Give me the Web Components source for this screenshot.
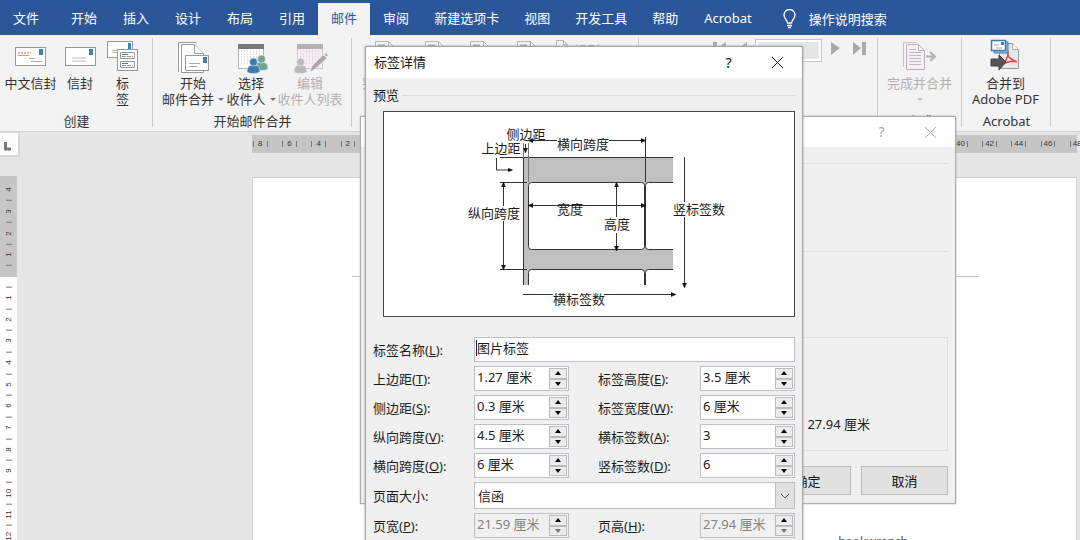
<!DOCTYPE html>
<html lang="zh-CN">
<head>
<meta charset="utf-8">
<title>标签详情</title>
<style>
html,body{margin:0;height:100%;overflow:hidden}
body{font:13px/16px "Noto Sans","Noto Sans CJK SC",sans-serif;color:#333}
</style>
</head>
<body>
<word-app></word-app>
<script>
const define = (name, html) => customElements.define(name, class extends HTMLElement {
  constructor() {
    super();
    this.attachShadow({ mode: 'open' });
  }
  connectedCallback() {
    if (this.shadowRoot.childNodes.length) return;
    const t = document.createElement('template');
    t.innerHTML = typeof html === 'function' ? html(this) : html;
    this.shadowRoot.append(t.content.cloneNode(true));
  }
});

const envelope = (x, y, w, h, s = '#999') => `<rect x="${x + .5}" y="${y + .5}" width="${w - 1}" height="${h - 1}" fill="#fff" stroke="${s}"/>`;
const grid = (dark, dot, fill) => {
  let d = '';
  for (let y = 13; y < 28; y += 3) for (let x = 7; x < 28; x += 3) d += `<path d="M${x} ${y}h1" stroke="${dot}"/>`;
  return `<rect x="4.500" y="6.500" width="25" height="24" fill="${fill}" stroke="${dot}"/><path d="M4 6h26v5H4z" fill="${dark}"/>${d}`;
};
const person = (x, y, c) => `<g transform="translate(${x} ${y})" fill="${c}" stroke="#f3f3f3" stroke-width=".6"><path d="M0 14c0-5 2-7 6.500-7s6.500 2 6.500 7c-3 2-10 2-13 0z"/><circle cx="6.500" cy="4" r="4"/></g>`;

const ICONS = {
  cnEnvelope: envelope(2, 9, 31, 19) + '<path d="M26 11h4v6h-4z" fill="#3f7ec0"/><path d="M5 15h13" stroke="#efb6a5" stroke-width="2" stroke-dasharray="2 1"/><path d="M5 17.500h11M16 20.500h6M18 23.500h11" stroke="#aaa"/>',
  envelope: envelope(2, 9, 31, 19) + '<path d="M26 11h4v6h-4z" fill="#3f7ec0"/><path d="M9 20h14M9 23h14" stroke="#bbb"/>',
  labels: envelope(2, 3, 26, 17) + '<path d="M23 5h3v6h-3z" fill="#3f7ec0"/><path d="M7 12.500h5M7 14.500h5" stroke="#bbb"/>' + envelope(12, 11, 21, 22) +
    '<g fill="none" stroke="#999"><path d="M15.500 14.500h14v6h-14zM15.500 23.500h14v6h-14z"/><path d="M17 18.500h11M17 27.500h11" stroke-dasharray="4 1"/><path d="M17 16.500h6M17 25.500h6" stroke="#3f7ec0"/></g>',
  merge: '<g fill="#fff" stroke="#999"><path d="M2.500 34V4.500h18M5.500 34.500v-28h13l9 9v19z"/><path d="M18.500 6.500v9h9"/><path d="M9.500 17.500h23v15h-23z"/></g><path d="M27 19h4v6h-4z" fill="#3f7ec0"/><path d="M13 25.500h11M13 28.500h8" stroke="#aaa"/>',
  people: grid('#777', '#b5b5b5', '#fff') + person(21, 17, '#71a593') + person(13, 20, '#3f7ab5'),
  edit: grid('#b3b0b3', '#cdc6cd', '#f5eef5') + person(1, 20, '#bbb8bb') + '<path d="M17 34l2-6 11-11 4 3-12 11zM31 16l2-1 2 2-1 2z" fill="#aaa8aa" stroke="#f3f3f3" stroke-width=".5"/>',
  finish: '<path d="M1.500 29V4.500h13" fill="none" stroke="#c8c0c8"/><path d="M4.500 6.500h12l6 6v19h-18z" fill="#f6eff6" stroke="#b8b1b8"/><path d="M16.500 6.500v6h6M7 11.500h7M7 14.500h12M7 17.500h12M7 20.500h12M7 23.500h12M7 26.500h12" stroke="#c0b8c0" fill="none"/><path d="M24 18.500h8M28 14l5 4.500-5 4.500" fill="none" stroke="#b0b0b0" stroke-width="2"/>',
  pdf: '<path d="M11.500 5.500h13l6 6v19h-19z" fill="#e8e8e8" stroke="#999"/><path d="M24.500 5.500v6h6" fill="#fff" stroke="#aaa"/><path d="M12 28c6-4 9-10 8-15-2 7 5 9 9 11-5-2-11 0-16 3" fill="none" stroke="#f03e3e" stroke-width="1.500"/><path d="M6 4h14v11H6z" fill="#8db6dc" stroke="#3f7db5"/><path d="M3.500 2.500h14v10h-14z" fill="#fff" stroke="#3f7db5" stroke-width="1.500"/><path d="M13 4h3v3h-3z" fill="#3f7db5"/><path d="M6 7h5M8 10h6" stroke="#9ab"/><path d="M3 21h8v-4l7 7-7 8v-4H3z" fill="#555" stroke="#444"/>',
  page: '<path d="M4.500 3.500h13l7 7v22h-20z" fill="#f6f1f6" stroke="#b8b3b8"/><path d="M17.500 3.500v7h7" fill="none" stroke="#b8b3b8"/><path d="M7 7.500h7" stroke="#aaa" stroke-width="2"/>'
};

define('menu-tab', `<style>
:host{display:flex;height:100%}
button{all:unset;display:flex;align-items:center;box-sizing:border-box;padding:0 13px 2px;margin-top:3px;color:#fff;white-space:nowrap;cursor:default}
:host([wide]) button{padding:0 12px 2px}
:host([first]) button{margin-right:6px}
:host([active]) button{background:#f3f3f3;color:#2b579a}
</style><button type="button"><slot></slot></button>`);

define('ribbon-button', el => `<style>
:host{display:block;flex:none;width:var(--w,60px)}
button{all:unset;display:flex;flex-direction:column;align-items:center;width:100%;color:#333;white-space:nowrap;text-align:center}
button:disabled{color:#b1b1b1}
svg{width:35px;height:36px;flex:none;margin-bottom:1px}
.two{display:flex;align-items:center;gap:4px;min-height:16px}
i{border:3px solid transparent;border-top:3px solid #777;border-bottom:0}
button:disabled i{border-top-color:#bbb}
</style><button type="button" ${el.hasAttribute('disabled') ? 'disabled' : ''}>
<svg viewBox="0 0 35 36" aria-hidden="true">${ICONS[el.getAttribute('icon')]}</svg>
<span><slot></slot></span><span class="two"><slot name="second"></slot>${el.hasAttribute('menu') ? '<i></i>' : ''}</span></button>`);

define('ribbon-group', `<style>
:host{display:flex;flex-direction:column;flex:none;box-sizing:border-box;width:var(--w);padding:3px 0 1px;position:relative}
:host::after{content:"";position:absolute;right:0;top:3px;bottom:4px;border-right:1px solid #cbcbcb}
.tools{display:flex;flex:1;padding:0 var(--pad,0px)}
.caption{text-align:center;line-height:18px;height:18px}
</style><div class="tools"><slot></slot></div><div class="caption"><slot name="caption"></slot></div>`);

define('ruler-bar', el => {
  const v = el.hasAttribute('vertical');
  const cells = el.getAttribute('labels').split(',').map(n => `<span>${n === '-' ? '' : n}</span>`).join('');
  return `<style>
:host{display:block;font:8px/8px "Liberation Sans",sans-serif;color:#333;background:var(--bg,#c6c6c6)}
div{display:grid;height:100%}
.h{grid-template-columns:repeat(29,1fr);width:846px}
.h span{display:flex;align-items:center;justify-content:center;position:relative;width:50%;height:100%}
.h span::before,.h span::after{content:"";position:absolute;top:6px;height:6px;border-left:1px solid #777}
.h span::before{left:0}.h span::after{right:0}
.v{grid-auto-rows:1fr}
.v span{writing-mode:vertical-rl;transform:rotate(180deg);display:flex;align-items:center;justify-content:center;position:relative}
.v span::before{content:"";position:absolute;top:0;left:5px;width:6px;border-top:1px solid #777}
.v.end span::before{top:auto;bottom:0}
</style><div class="${v ? 'v' : 'h'} ${el.hasAttribute('end') ? 'end' : ''}">${cells}</div>`;
});

define('spin-field', el => {
  const off = el.hasAttribute('disabled') ? 'disabled' : '';
  return `<style>
:host{display:grid;grid-template-columns:1fr 95px;height:25px;color:#1c1c1c}
label{align-self:center;padding-top:1px}
.box{display:flex;box-sizing:border-box;border:1px solid #bfc0c7;background:#fff;padding:1px}
:host([disabled]) .box{background:#f0f0f0}
input{border:0;outline:0;padding:0 0 3px 1px;margin:0;width:0;flex:1;font:inherit;color:inherit;background:none}
input:disabled{color:#838383}
.steps{display:flex;flex-direction:column;width:18px}
button{flex:1;display:flex;align-items:center;justify-content:center;padding:0;margin:0;border:1px solid #bbb;background:#ececec;box-sizing:border-box;min-height:0}
i{border:3px solid transparent;border-bottom:4px solid #000;border-top:0}
.down i{border-top:4px solid #000;border-bottom:0}
:host([disabled]) .down i{border-top-color:#777}
</style><label for="f">${el.getAttribute('label')}(<u>${el.getAttribute('key')}</u>):</label>
<div class="box"><input id="f" type="text" value="${el.getAttribute('value')}" ${off}>
<span class="steps"><button type="button" aria-label="增加" ${off}><i></i></button><button type="button" class="down" aria-label="减少" ${off}><i></i></button></span></div>`;
});

define('name-field', `<style>
:host{display:grid;grid-template-columns:101px 1fr;height:25px;color:#1c1c1c}
label{align-self:center;padding-top:1px}
.box{display:flex;align-items:stretch;border:1px solid #bfc0c7;background:#fff;box-sizing:border-box;padding:1px}
.box::before{content:"";border-left:1px solid #222;margin:1px 0 4px}
input{border:0;outline:0;flex:1;min-width:0;padding:0 0 3px;font:inherit;color:inherit;background:none}
</style><label for="n">标签名称(<u>L</u>):</label><div class="box"><input id="n" type="text" value="图片标签"></div>`);

define('page-size-field', `<style>
:host{display:grid;grid-template-columns:101px 1fr;height:27px;color:#1c1c1c}
label{align-self:center}
.box{display:flex;position:relative;border:1px solid #bfc0c7;background:#fff;box-sizing:border-box}
select{appearance:none;border:0;outline:0;flex:1;padding:0 0 0 3px;margin:0;font:inherit;color:inherit;background:none}
svg{position:absolute;right:0;top:0;width:18px;height:25px;background:#e1e1e1;border-left:1px solid #bfc0c7;pointer-events:none}
</style><label for="s">页面大小:</label><div class="box"><select id="s"><option>信函</option></select>
<svg viewBox="0 0 18 25" aria-hidden="true"><path d="M5 11l4 4 4-4" fill="none" stroke="#555"/></svg></div>`);

const oneWay = ['M525.500 144v8', 'M496.500 158v12h15', 'M684.500 157v130', 'M523 294.500h152'].map(d => `<path d="${d}" marker-end="url(#a)"/>`).join('');
const twoWay = ['M529 140.500h116', 'M503.500 183v86', 'M529 205.500h116', 'M616.500 183v67'].map(d => `<path d="${d}" marker-start="url(#a)" marker-end="url(#a)"/>`).join('');

define('label-preview', `<style>
:host{display:block;border:1px solid #444;background:#fff}
svg{display:block;width:100%;height:204px}
text{fill:#1c1c1c;text-anchor:middle}
</style><svg viewBox="384 112 410 204" role="img" aria-label="预览">
<defs><clipPath id="c"><path d="M520 150h153v135H520z"/></clipPath>
<marker id="a" markerWidth="5" markerHeight="6" refX="4" refY="3" orient="auto-start-reverse" markerUnits="userSpaceOnUse"><path d="M0 1l5 2-5 2z" fill="#111" stroke="#111" stroke-width=".5"/></marker></defs>
<g clip-path="url(#c)"><path d="M523 157h150v128H523z" fill="#c0c0c0"/>
<g fill="#fff" stroke="#333"><rect x="528.500" y="182.500" width="116" height="67" rx="3"/><rect x="645.500" y="182.500" width="60" height="67" rx="3"/><rect x="528.500" y="269.500" width="116" height="40" rx="3"/><rect x="645.500" y="269.500" width="60" height="40" rx="3"/></g>
<path d="M523.500 285V157.500h150" fill="none" stroke="#333"/></g>
<g fill="none" stroke="#333">
<path d="M523.500 143v14M528.500 143v39" stroke="#777"/><path d="M645.500 137v45M500 157.500h23M500 182.500h27M500 269.500h27"/>
${oneWay}${twoWay}</g>
<g fill="#fff"><path d="M557 137h52v16h-52zM468 206h52v15h-52zM557 206h26v10h-26zM604 217h26v16h-26zM673 202h54v15h-54zM553 290h51v16h-51z"/></g>
<text x="526" y="139">侧边距</text><text x="501" y="153">上边距</text><text x="583" y="149">横向跨度</text><text x="494" y="218">纵向跨度</text><text x="570" y="214">宽度</text><text x="617" y="229">高度</text><text x="699" y="214">竖标签数</text><text x="579" y="304">横标签数</text>
</svg>`);

define('window-title', `<style>
:host{display:flex;align-items:center;height:31px;background:#fff;color:#111;padding-left:8px}
h2{flex:1;font:inherit;margin:0;padding-bottom:2px}
button{all:unset;display:flex;justify-content:center;width:49px;font-size:14px}
svg{width:11px;height:11px}
</style><h2><slot></slot></h2><button type="button" aria-label="帮助">?</button>
<button type="button" aria-label="关闭"><svg viewBox="0 0 11 11"><path d="M0 0l11 11M11 0L0 11" stroke="currentColor" fill="none"/></svg></button>`);

define('label-dialog', `<style>
:host{display:block;border:1px solid #a5a5a5;background:#f0f0f0;box-shadow:0 0 2px #999;box-sizing:border-box;color:#1c1c1c}
main{display:flex;flex-direction:column;padding:9px 7px 12px}
h3{font:inherit;margin:0;display:flex;align-items:center;gap:3px}
h3::after{content:"";flex:1;border-top:1px solid #dcdcdc}
label-preview{margin:8px 0 20px 10px}
form{display:grid;grid-template-columns:196px 197px;justify-content:space-between;row-gap:4px}
.all{grid-column:1/-1}
</style><window-title>标签详情</window-title><main><h3>预览</h3><label-preview></label-preview><form>
<name-field class="all"></name-field>
<spin-field label="上边距" key="T" value="1.27 厘米"></spin-field><spin-field label="标签高度" key="E" value="3.5 厘米"></spin-field>
<spin-field label="侧边距" key="S" value="0.3 厘米"></spin-field><spin-field label="标签宽度" key="W" value="6 厘米"></spin-field>
<spin-field label="纵向跨度" key="V" value="4.5 厘米"></spin-field><spin-field label="横标签数" key="A" value="3"></spin-field>
<spin-field label="横向跨度" key="O" value="6 厘米"></spin-field><spin-field label="竖标签数" key="D" value="6"></spin-field>
<page-size-field class="all"></page-size-field>
<spin-field label="页宽" key="P" value="21.59 厘米" disabled></spin-field><spin-field label="页高" key="H" value="27.94 厘米" disabled></spin-field>
</form></main>`);

define('options-dialog', `<style>
:host{display:block;border:1px solid #aaa;background:#f0f0f0;box-shadow:0 0 2px #bbb;box-sizing:border-box;color:#222}
window-title{color:#aaa;height:30px}
main{padding:16px 7px 9px}
section{height:87px;border-top:1px solid #dfdfdf}
fieldset{margin:-2px 0 15px;height:114px;padding:0 77px 18px 0;border:1px solid #dfdfdf;box-sizing:border-box;display:flex;align-items:end;justify-content:end}
footer{display:flex;justify-content:end;gap:10px}
button{font:inherit;color:#111;width:87px;height:29px;padding:0;border:1px solid #bdbdbd;background:#e1e1e1}
</style><window-title></window-title><main><section></section><section></section><fieldset>27.94 厘米</fieldset>
<footer><button type="button">确定</button><button type="button">取消</button></footer></main>`);

define('word-ribbon', `<style>
:host{display:flex;height:96px;background:#f3f3f3;border-bottom:1px solid #d2d2d2}
.mini{display:flex;align-items:start;gap:4px;color:#aaa;white-space:nowrap;padding-top:1px}
.mini svg{width:15px;height:15px}
.mini span{padding-top:3px}
.nav{display:flex;align-items:start;margin-left:auto;padding:1px 11px 0 0;gap:9px}
.nav svg{width:14px;height:18px;fill:#aaa}
.nav svg:first-child{margin-right:-3px}
input{width:65px;height:21px;box-sizing:border-box;border:2px solid #fff;outline:1px solid #c6c6c6;background:#e6e6e6;margin:1px 0 0;padding:0}
</style>
<ribbon-group style="--w:153px">
<ribbon-button icon="cnEnvelope" style="--w:61px">中文信封</ribbon-button>
<ribbon-button icon="envelope" style="--w:38px">信封</ribbon-button>
<ribbon-button icon="labels" style="--w:47px">标<span slot="second">签</span></ribbon-button>
<span slot="caption">创建</span></ribbon-group>
<ribbon-group style="--w:199px;--pad:8px">
<ribbon-button icon="merge" menu style="--w:64px">开始<span slot="second">邮件合并</span></ribbon-button>
<ribbon-button icon="people" menu style="--w:52px">选择<span slot="second">收件人</span></ribbon-button>
<ribbon-button icon="edit" disabled style="--w:66px">编辑<span slot="second">收件人列表</span></ribbon-button>
<span slot="caption">开始邮件合并</span></ribbon-group>
<ribbon-group style="--w:287px;--pad:9px">
<ribbon-button icon="page" disabled style="--w:54px">突出显示</ribbon-button>
<ribbon-button icon="page" disabled style="--w:46px"></ribbon-button>
<ribbon-button icon="page" disabled style="--w:44px"></ribbon-button>
<ribbon-button icon="page" disabled style="--w:50px"></ribbon-button>
<div class="mini"><svg viewBox="0 0 15 15"><path d="M1.500 15V1.500h7l4 4V15M8.500 1.500v4h4" fill="none" stroke="#b8b3b8"/></svg><span>规则</span></div>
</ribbon-group>
<ribbon-group style="--w:239px">
<div class="nav"><svg viewBox="0 0 14 18"><path d="M0 3h4v13H0zM13 3v13L5 9z"/></svg><svg viewBox="0 0 14 18"><path d="M14 3v13L6 9z"/></svg>
<input type="text" aria-label="记录" disabled><svg viewBox="0 0 14 18"><path d="M1 3v13l9-7z"/></svg><svg viewBox="0 0 14 18"><path d="M0 3v13l8-7zM9 3h4v13H9z"/></svg></div>
</ribbon-group>
<ribbon-group style="--w:84px"><ribbon-button icon="finish" menu disabled style="--w:83px">完成并合并</ribbon-button><span slot="caption">完成</span></ribbon-group>
<ribbon-group style="--w:89px"><ribbon-button icon="pdf" style="--w:87px">合并到<span slot="second">Adobe PDF</span></ribbon-button><span slot="caption">Acrobat</span></ribbon-group>`);

define('word-document', `<style>
:host{display:flex;background:#e6e6e6;min-height:0;overflow:hidden}
.side{width:21px;display:flex;flex-direction:column;flex:none}
.corner{height:22px;background:#fcfcfc;border:solid #d6d6d6;border-width:1px 2px 2px 0;margin-bottom:19px;width:18px}
.corner svg{display:block;width:18px;height:22px}
.side ruler-bar{width:17px;box-sizing:border-box;flex:none}
.top{height:101px;padding:3px 0 11px}
.bottom{height:270px;padding-top:10px;--bg:#fff}
.sheet{flex:1;min-width:0;margin:3px 3px 0 231px;display:flex;flex-direction:column}
.sheet>ruler-bar{height:18px;padding-left:1px;margin-bottom:24px;flex:none}
article{flex:1;display:flex;flex-direction:column;align-items:end;background:#fff;border:1px solid #d2d2d2;border-width:1px 1px 0;margin:0;color:#555;padding:98px 97px 0 99px}
hr{width:100%;box-sizing:border-box;border:0;border-top:1px solid #c4c4c4;margin:0 0 257px}
p{margin:0 71px 0 0;white-space:nowrap;font-size:12px}
</style><div class="side"><div class="corner"><svg viewBox="0 0 18 22"><path d="M5.500 9v7h5.500" fill="none" stroke="#777" stroke-width="3"/></svg></div>
<ruler-bar class="top" vertical labels="4,3,2,1"></ruler-bar><ruler-bar class="bottom" vertical end labels="1,2,3,4,5,6,7,8,9,10,11,12"></ruler-bar></div>
<div class="sheet"><ruler-bar labels="8,6,4,2,-,2,4,6,8,10,12,14,16,18,20,22,24,26,28,30,32,34,36,38,40,42,44,46,48"></ruler-bar><article><hr><p>hookwrench</p></article></div>`);

define('word-app', `<style>
:host{display:grid;grid-template-rows:35px auto 1fr;height:100vh;position:relative;overflow:hidden}
nav{display:flex;background:#2b579a;min-width:0}
.tell{all:unset;display:flex;align-items:center;gap:11px;color:#fff;padding:2px 0 0 17px;white-space:nowrap}
.tell svg{width:16px;height:20px}
options-dialog{position:absolute;left:360px;top:116px;width:596px;height:388px}
label-dialog{position:absolute;left:365px;top:46px;width:438px}
</style>
<nav><menu-tab first>文件</menu-tab><menu-tab>开始</menu-tab><menu-tab>插入</menu-tab><menu-tab>设计</menu-tab><menu-tab>布局</menu-tab><menu-tab>引用</menu-tab><menu-tab active>邮件</menu-tab><menu-tab>审阅</menu-tab><menu-tab wide>新建选项卡</menu-tab><menu-tab>视图</menu-tab><menu-tab wide>开发工具</menu-tab><menu-tab>帮助</menu-tab><menu-tab>Acrobat</menu-tab>
<button class="tell" type="button"><svg viewBox="0 0 16 20" aria-hidden="true"><path d="M5.500 14c0-3-3.500-4-3.500-8a5.500 5.500 0 0 1 11 0c0 4-3.500 5-3.500 8zM5 16.500h5M6 18.500h3" fill="none" stroke="#fff" stroke-width="1.300"/></svg>操作说明搜索</button></nav>
<word-ribbon></word-ribbon><word-document></word-document>
<options-dialog></options-dialog><label-dialog></label-dialog>`);
</script>
</body>
</html>
